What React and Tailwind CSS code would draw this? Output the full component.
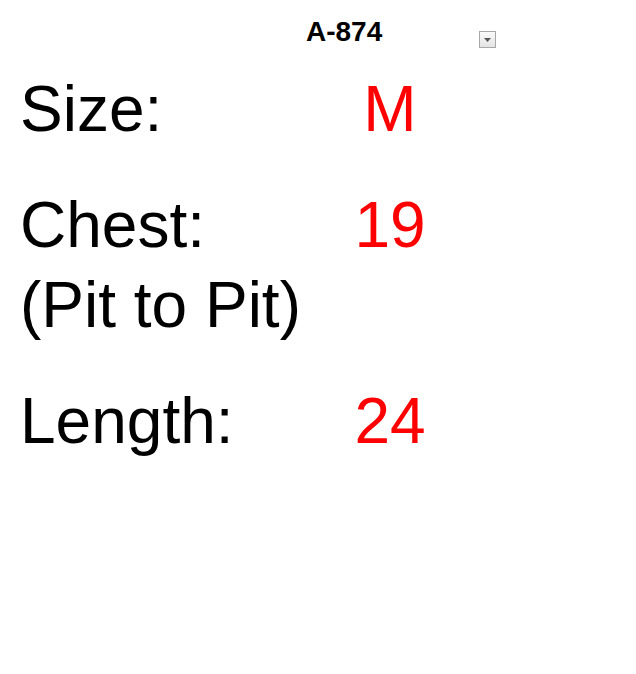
export default function App() {
  const font = { fontFamily: '"Liberation Sans", Arial, sans-serif' };
  return (
    <div className="w-[636px] h-[674px] bg-white text-black" style={font}>
      <div className="flex items-start pt-[16px] h-[69px]">
        <div className="ml-[306px] w-[80px] text-[28px] leading-[32px] font-bold">A-874</div>
        <div className="ml-[93px] mt-[15px] w-[17px] h-[17px] border border-[#a8a8a8] bg-gradient-to-b from-[#fafafa] to-[#e4e4e4] flex items-center justify-center">
          <svg width="7" height="4" viewBox="0 0 7 4"><path d="M0 0h7L3.5 4z" fill="#555" /></svg>
        </div>
      </div>
      <div className="grid grid-cols-[310px_120px] pl-[20px] text-[64px] leading-[80px]">
        <div>Size:</div>
        <div className="text-center text-[#ff0000]">M</div>
        <div className="mt-[36px]">Chest:<br />(Pit to Pit)</div>
        <div className="mt-[36px] text-center text-[#ff0000]">19</div>
        <div className="mt-[36px]">Length:</div>
        <div className="mt-[36px] text-center text-[#ff0000]">24</div>
      </div>
    </div>
  );
}
